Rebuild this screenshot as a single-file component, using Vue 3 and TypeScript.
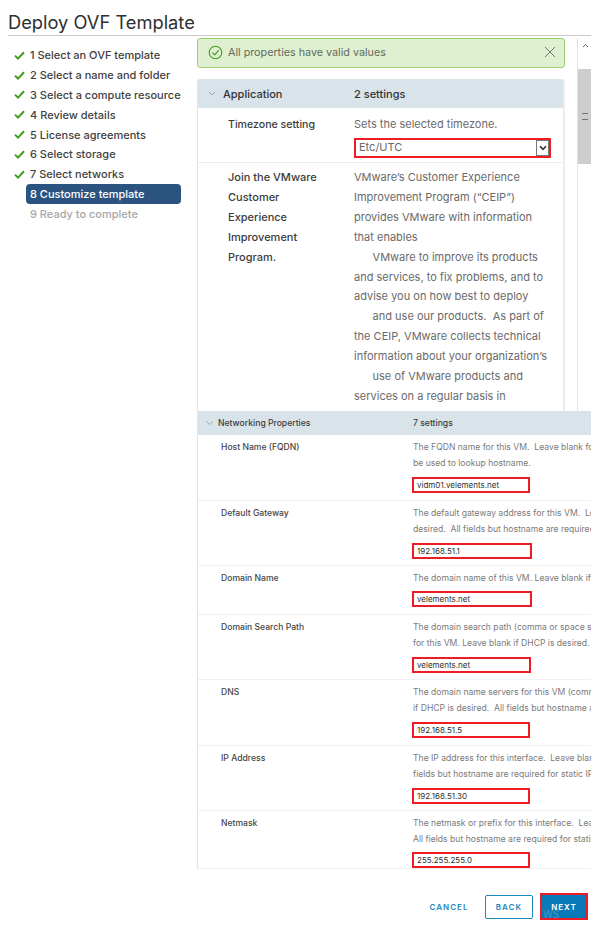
<script setup lang="ts">
interface NetRow {
  label: string
  lines: string[]
  value: string
  boxWidth: number
  gap: number
  pad: number
}

const steps = [
  '1 Select an OVF template',
  '2 Select a name and folder',
  '3 Select a compute resource',
  '4 Review details',
  '5 License agreements',
  '6 Select storage',
  '7 Select networks',
]

const ceip = [
  'VMware’s Customer Experience',
  'Improvement Program (“CEIP”)',
  'provides VMware with information',
  'that enables',
  '      VMware to improve its products',
  'and services, to fix problems, and to',
  'advise you on how best to deploy',
  '      and use our products.  As part of',
  'the CEIP, VMware collects technical',
  'information about your organization’s',
  '      use of VMware products and',
  'services on a regular basis in',
]

const rows: NetRow[] = [
  {
    label: 'Host Name (FQDN)',
    lines: ['The FQDN name for this VM.  Leave blank for DHCP, DNS will', 'be used to lookup hostname.'],
    value: 'vidm01.velements.net',
    boxWidth: 118,
    gap: 6,
    pad: 6.5,
  },
  {
    label: 'Default Gateway',
    lines: ['The default gateway address for this VM.  Leave blank if DHCP is', 'desired.  All fields but hostname are required for static IP.'],
    value: '192.168.51.1',
    boxWidth: 120,
    gap: 6,
    pad: 6.5,
  },
  {
    label: 'Domain Name',
    lines: ['The domain name of this VM. Leave blank if DHCP is desired.'],
    value: 'velements.net',
    boxWidth: 120,
    gap: 5,
    pad: 6.5,
  },
  {
    label: 'Domain Search Path',
    lines: ['The domain search path (comma or space separated domain names)', 'for this VM. Leave blank if DHCP is desired.'],
    value: 'velements.net',
    boxWidth: 119,
    gap: 6,
    pad: 6.5,
  },
  {
    label: 'DNS',
    lines: ['The domain name servers for this VM (comma separated). Leave blank', 'if DHCP is desired.  All fields but hostname are required for static IP.'],
    value: '192.168.51.5',
    boxWidth: 118,
    gap: 6,
    pad: 6.5,
  },
  {
    label: 'IP Address',
    lines: ['The IP address for this interface.  Leave blank if DHCP is desired.  All', 'fields but hostname are required for static IP.'],
    value: '192.168.51.30',
    boxWidth: 118,
    gap: 6,
    pad: 6.5,
  },
  {
    label: 'Netmask',
    lines: ['The netmask or prefix for this interface.  Leave blank if DHCP is desired.', 'All fields but hostname are required for static IP.'],
    value: '255.255.255.0',
    boxWidth: 118,
    gap: 4.5,
    pad: 0,
  },
]
</script>

<template>
  <div class="page">
    <h1 class="title">Deploy OVF Template</h1>
    <div class="body">
      <nav class="steps">
        <div v-for="step in steps" :key="step" class="step">
          <svg class="check" width="11" height="9" viewBox="0 0 11 9">
            <path d="M1 4.6 L4 7.6 L10 1.2" fill="none" stroke="#3f9c1f" stroke-width="2" />
          </svg>
          <span>{{ step }}</span>
        </div>
        <div class="step current"><span>8 Customize template</span></div>
        <div class="step todo"><span>9 Ready to complete</span></div>
      </nav>

      <main class="main">
        <div class="upper">
          <div class="upper-col">
            <div class="alert">
              <svg class="alert-icon" width="15" height="15" viewBox="0 0 15 15">
                <circle cx="7.5" cy="7.5" r="6.3" fill="none" stroke="#3f9c1f" stroke-width="1.1" />
                <path d="M4.4 7.6 L6.7 9.9 L10.8 5.2" fill="none" stroke="#3f9c1f" stroke-width="1.1" />
              </svg>
              <span class="alert-text">All properties have valid values</span>
              <svg class="alert-close" width="12" height="12" viewBox="0 0 12 12">
                <path d="M1 1 L11 11 M11 1 L1 11" stroke="#6f7a70" stroke-width="1" fill="none" />
              </svg>
            </div>
            <section class="app-panel">
              <header class="app-head">
                <svg class="chev" width="8" height="5" viewBox="0 0 8 5">
                  <path d="M1 1 L4 4 L7 1" fill="none" stroke="#9aa4aa" stroke-width="1" />
                </svg>
                <span class="app-name">Application</span>
                <span>2 settings</span>
              </header>
              <div class="app-row tz">
                <div class="app-label">Timezone setting</div>
                <div class="app-value">
                  <div>Sets the selected timezone.</div>
                  <div class="select">
                    <span>Etc/UTC</span>
                    <span class="select-btn">
                      <svg width="8" height="6" viewBox="0 0 8 6">
                        <path d="M1 1.2 L4 4.4 L7 1.2" fill="none" stroke="#333" stroke-width="1.6" />
                      </svg>
                    </span>
                  </div>
                </div>
              </div>
              <div class="app-row">
                <div class="app-label">Join the VMware<br />Customer<br />Experience<br />Improvement<br />Program.</div>
                <div class="app-value">
                  <div v-for="line in ceip" :key="line">{{ line }}</div>
                </div>
              </div>
            </section>
          </div>
          <div class="scrollbar">
            <div class="scroll-up">
              <svg width="7" height="5" viewBox="0 0 7 5">
                <path d="M1 4 L3.5 1.5 L6 4" fill="none" stroke="#666" stroke-width="1" />
              </svg>
            </div>
            <div class="scroll-thumb"><span class="grip"></span></div>
          </div>
        </div>

        <section class="net">
          <header class="net-head">
            <svg class="chev" width="7" height="4" viewBox="0 0 7 4">
              <path d="M0.5 0.5 L3.5 3.5 L6.5 0.5" fill="none" stroke="#9aa4aa" stroke-width="1" />
            </svg>
            <span class="net-name">Networking Properties</span>
            <span>7 settings</span>
          </header>
          <div v-for="row in rows" :key="row.label" class="net-row" :style="{ paddingBottom: row.pad + 'px' }">
            <div class="net-label">{{ row.label }}</div>
            <div class="net-value">
              <div v-for="line in row.lines" :key="line" class="net-line">{{ line }}</div>
              <div class="net-input" :style="{ width: row.boxWidth + 'px', marginTop: row.gap + 'px' }">{{ row.value }}</div>
            </div>
          </div>
        </section>
      </main>
    </div>

    <footer class="footer">
      <button class="btn link">CANCEL</button>
      <button class="btn outline">BACK</button>
      <button class="btn primary">NEXT<span class="watermark">WS</span></button>
    </footer>
  </div>
</template>

<style>
html,
body {
  margin: 0;
  background: #fff;
}
</style>

<style scoped>
.page {
  width: 591px;
  height: 934px;
  overflow: hidden;
  display: flex;
  flex-direction: column;
  font-family: Inter, 'Noto Sans', sans-serif;
  color: #565656;
}

.title {
  margin: 0 0 0 8px;
  height: 35px;
  border-bottom: 1px solid #c9c9c9;
  font-size: 18.3px;
  font-weight: 400;
  line-height: 44px;
  color: #2f2f2f;
  white-space: nowrap;
}

.body {
  display: flex;
  height: 834px;
}

.steps {
  width: 197px;
  flex: none;
  padding-top: 9.5px;
  box-sizing: border-box;
}

.step {
  height: 19.8px;
  display: flex;
  align-items: center;
  padding-left: 14px;
  font-size: 11px;
  font-weight: 500;
  color: #3f3f3f;
  white-space: nowrap;
}

.check {
  margin-right: 5px;
  flex: none;
}

.step.current {
  margin-left: 26px;
  width: 155px;
  box-sizing: border-box;
  padding-left: 4px;
  background: #2a5380;
  color: #fff;
  border-radius: 4px;
}

.step.todo {
  padding-left: 30px;
  color: #a6a6a6;
}

.main {
  width: 394px;
  flex: none;
  overflow: hidden;
}

.upper {
  display: flex;
  height: 375px;
  overflow: hidden;
}

.upper-col {
  width: 368px;
  flex: none;
  padding-top: 2px;
}

.alert {
  height: 30px;
  box-sizing: border-box;
  display: flex;
  align-items: center;
  padding: 0 8px 2px 10px;
  background: #dff0d0;
  border: 1px solid #9dcf6e;
  border-radius: 3px;
}

.alert-icon {
  flex: none;
}

.alert-text {
  flex: 1;
  margin-left: 5px;
  font-size: 10.75px;
  color: #5f6b5f;
}

.app-panel {
  margin-top: 11px;
  height: 340px;
  overflow: hidden;
  box-sizing: border-box;
  border-left: 1px solid #e4e4e4;
  border-right: 2px solid #ececec;
  border-radius: 3px 3px 0 0;
}

.app-head {
  height: 29px;
  display: flex;
  align-items: center;
  background: #d9e4ea;
  font-size: 11px;
  font-weight: 500;
  color: #333;
}

.app-head .chev {
  margin: 0 7px 0 10px;
}

.app-name {
  width: 131px;
}

.app-row {
  display: flex;
  font-size: 11px;
  line-height: 19.9px;
  padding-top: 5px;
  white-space: pre;
}

.app-row.tz {
  height: 47px;
  border-bottom: 1px solid #eee;
  padding-top: 7px;
}

.app-label {
  width: 126px;
  padding-left: 30px;
  flex: none;
  color: #3c3c3c;
  font-weight: 500;
}

.tz .app-label {
  font-size: 10.6px;
}

.app-value {
  color: #6a6a6a;
}

.select {
  width: 197px;
  height: 20px;
  box-sizing: border-box;
  margin-top: 3px;
  border: 2px solid #ee1c25;
  display: flex;
  align-items: center;
  justify-content: space-between;
  padding-left: 3px;
  line-height: 15px;
}

.select-btn {
  width: 13px;
  height: 16px;
  box-sizing: border-box;
  border: 1px solid #777;
  display: flex;
  align-items: center;
  justify-content: center;
}

.scrollbar {
  width: 14px;
  margin-left: 12px;
  flex: none;
  border-left: 1px solid #e2e2e2;
  background: #fff;
  margin-top: 2px;
}

.scroll-up {
  height: 14px;
  display: flex;
  align-items: center;
  justify-content: center;
}

.scroll-thumb {
  margin-top: 17px;
  height: 95px;
  background: #cdcdcd;
  display: flex;
  align-items: center;
  justify-content: center;
}

.grip {
  width: 6px;
  height: 5px;
  border-top: 1px solid #777;
  border-bottom: 1px solid #777;
}

.net {
  border-left: 1px solid #e4e4e4;
  height: 458px;
  overflow: hidden;
  box-sizing: border-box;
}

.net-head {
  height: 24px;
  display: flex;
  align-items: center;
  background: #d9e4ea;
  font-size: 8.6px;
  font-weight: 500;
  color: #3c3c3c;
  white-space: nowrap;
}

.net-head .chev {
  margin: 0 5px 0 8px;
}

.net-name {
  width: 195px;
}

.net-row {
  display: flex;
  padding-top: 4px;
  border-bottom: 1px solid #f0f0f0;
  font-size: 8.6px;
  line-height: 16px;
  white-space: pre;
}

.net-label {
  width: 192px;
  padding-left: 23px;
  flex: none;
  color: #454545;
  font-weight: 500;
}

.net-value {
  color: #7a7a7a;
}

.net-line {
  height: 16px;
}

.net-input {
  height: 16px;
  box-sizing: border-box;
  margin-left: -1px;
  border: 2px solid #ee1c25;
  padding-left: 3px;
  line-height: 12px;
  color: #2f2f2f;
  font-size: 8px;
}

.footer {
  display: flex;
  justify-content: flex-end;
  align-items: center;
  gap: 7px;
  padding: 23px 3px 0 0;
}

.btn {
  height: 24px;
  width: 48px;
  padding: 0;
  font-family: inherit;
  font-size: 8px;
  font-weight: 600;
  letter-spacing: 1px;
  border-radius: 2px;
  box-sizing: border-box;
  background: #fff;
  color: #1d87c0;
  border: 1px solid transparent;
}

.btn.link {
  margin-right: 7px;
  width: 44px;
}

.btn.outline {
  border-color: #1d87c0;
}

.btn.primary {
  position: relative;
  height: 27px;
  background: #0a79b8;
  color: #fff;
  border: 2px solid #ee1c25;
  border-radius: 0;
}

.watermark {
  position: absolute;
  left: 1px;
  bottom: -1px;
  font-weight: 400;
  font-size: 10px;
  letter-spacing: 0;
  line-height: 10px;
  color: #4f97c2;
}
</style>
